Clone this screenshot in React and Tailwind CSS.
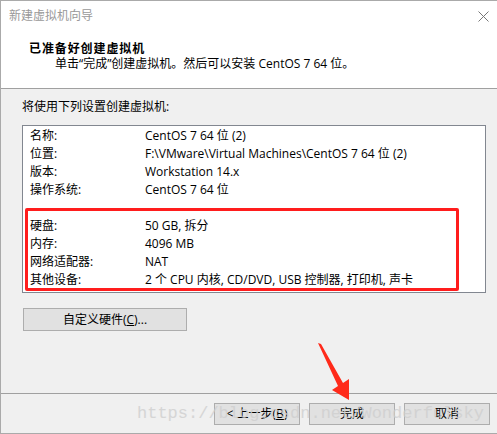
const rows1 = [
  ["名称:", "CentOS 7 64 位 (2)"],
  ["位置:", "F:\\VMware\\Virtual Machines\\CentOS 7 64 位 (2)"],
  ["版本:", "Workstation 14.x"],
  ["操作系统:", "CentOS 7 64 位"],
];

const rows2 = [
  ["硬盘:", "50 GB, 拆分"],
  ["内存:", "4096 MB"],
  ["网络适配器:", "NAT"],
  ["其他设备:", "2 个 CPU 内核, CD/DVD, USB 控制器, 打印机, 声卡"],
];

function Row({ label, value }) {
  return (
    <div className="flex h-[18px] items-center">
      <span className="w-[115px] shrink-0">{label}</span>
      <span>{value}</span>
    </div>
  );
}

function WinButton({ children, className = "" }) {
  return (
    <button
      className={
        "h-[22px] bg-[#e1e1e1] border border-[#adadad] text-[12px] leading-none text-black flex items-center justify-center " +
        className
      }
    >
      {children}
    </button>
  );
}

export default function App() {
  return (
    <div
      className="relative w-[497px] h-[434px] flex flex-col bg-[#f0f0f0] border-t border-l border-b border-[#aaaaaa] text-[12px] text-black overflow-hidden"
      style={{ fontFamily: '"Open Sans", "Noto Sans CJK SC", sans-serif' }}
    >
      {/* header */}
      <div className="h-[88px] shrink-0 bg-white border-b border-[#a0a0a0]">
        <div className="h-[29px] flex items-center justify-between pl-[8px] pr-[8px]">
          <span className="text-[#999999]">新建虚拟机向导</span>
          <svg width="11" height="11" viewBox="0 0 11 11" className="mt-[1px]">
            <path d="M0.5 0.5 L10.5 10.5 M10.5 0.5 L0.5 10.5" stroke="#777" strokeWidth="1" />
          </svg>
        </div>
        <div className="mt-[11px] leading-[15px]">
          <p className="pl-[28px] font-bold tracking-[0.9px]">已准备好创建虚拟机</p>
          <p className="pl-[54px]">单击“完成”创建虚拟机。然后可以安装 CentOS 7 64 位。</p>
        </div>
      </div>

      {/* body */}
      <div className="flex-1 flex flex-col">
        <p className="mt-[10px] ml-[21px] leading-[16px]">将使用下列设置创建虚拟机:</p>
        <div className="relative mt-[10px] ml-[21px] w-[464px] h-[168px] bg-white border border-[#828790] pt-[1px] pl-[7px]">
          {rows1.map(([l, v]) => (
            <Row key={l} label={l} value={v} />
          ))}
          <div className="h-[18px]" />
          {rows2.map(([l, v]) => (
            <Row key={l} label={l} value={v} />
          ))}
          <div className="absolute left-[2px] top-[82px] w-[434px] h-[83px] border-[3px] border-[#ff1d1d] rounded-[2px]" />
        </div>
        <WinButton className="mt-[15px] ml-[22px] w-[164px] h-[23px]">
          自定义硬件(<span className="underline">C</span>)...
        </WinButton>
      </div>

      {/* footer */}
      <div className="h-[40px] shrink-0 border-t border-[#a0a0a0] flex justify-end gap-[9px] pr-[7px] pt-[9px]">
        <WinButton className="w-[86px]">
          &lt; 上一步(<span className="underline">B</span>)
        </WinButton>
        <WinButton className="w-[86px]">完成</WinButton>
        <WinButton className="w-[86px]">取消</WinButton>
      </div>

      {/* watermark */}
      <div
        className="absolute left-[136px] top-[402px] text-[17px] leading-[22px] text-[#cfcfcf] opacity-80 pointer-events-none whitespace-nowrap"
        style={{ fontFamily: '"Liberation Mono", monospace' }}
      >
        https://blog.csdn.net/Wonderfulsky
      </div>

      {/* red arrow annotation */}
      <svg className="absolute left-0 top-0 pointer-events-none" width="497" height="434">
        <polygon
          points="317,342 320,343 342,382 348,378 348,399 331,389 337,385"
          fill="#ff2a1a"
        />
      </svg>
    </div>
  );
}
